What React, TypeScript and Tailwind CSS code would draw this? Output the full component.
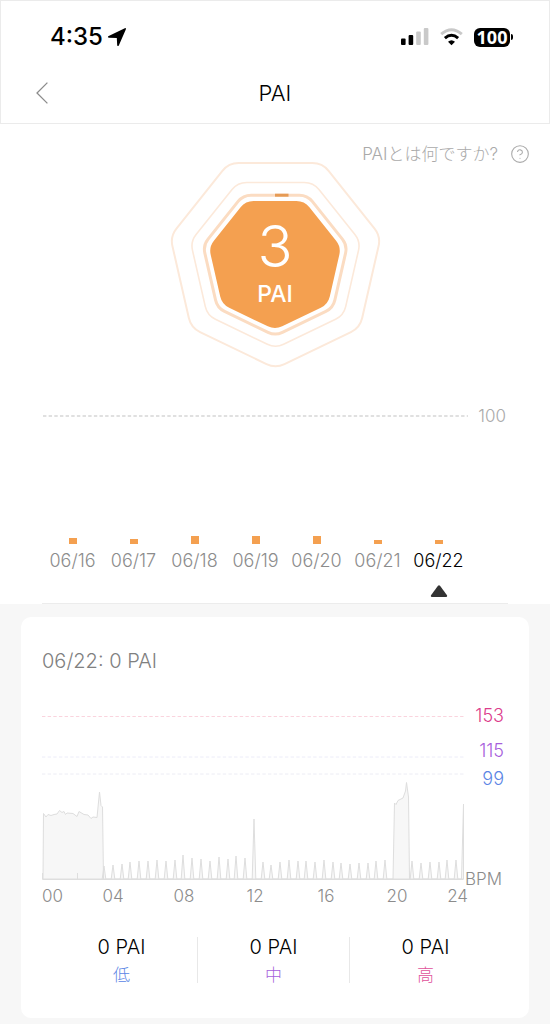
import { CircleHelp } from "lucide-react";

const days = [
  { label: "06/16", bar: "h-1.5" },
  { label: "06/17", bar: "h-[5px]" },
  { label: "06/18", bar: "h-2" },
  { label: "06/19", bar: "h-2" },
  { label: "06/20", bar: "h-2" },
  { label: "06/21", bar: "h-1" },
  { label: "06/22", bar: "h-1", selected: true },
];

const zones = [
  { value: "0 PAI", label: "低", color: "text-[#5b86e5]" },
  { value: "0 PAI", label: "中", color: "text-[#a75fdc]" },
  { value: "0 PAI", label: "高", color: "text-[#e0509a]" },
];

const hours = ["04", "08", "12", "16", "20"];

// [x, height] of the short pulses between the two long recordings
const pulses = [
  [62, 13], [71, 14], [80, 15], [88, 17], [97, 18], [106, 18], [115, 19], [124, 18], [133, 19],
  [141, 24], [150, 21], [159, 20], [168, 18], [177, 22], [186, 20], [194, 23], [203, 21], [212, 60],
  [221, 17], [229, 14], [238, 17], [247, 19], [256, 18], [264, 18], [273, 17], [282, 19], [291, 17],
  [299, 16], [308, 15], [317, 16], [326, 16], [334, 18], [343, 19],
];

const latePulses = [[370, 18], [379, 16], [388, 17], [397, 17], [405, 19], [414, 19]];

function pulsePath(items: number[][]) {
  return items.map(([x, h]) => `L${x - 1.8} 163L${x} ${163 - h}L${x + 1.8} 163`).join("");
}

const heartRate =
  "M1 163L1.5 97.5L4 101L6 98.5L9 99.5L12 98.5L15 98L17.5 94.5L20 96.5L22 95.5L23.5 98.5L25 97L31 97.5L35 100.5L37 95.5L42 98.5L46 99L49 102.5L51 101L55 101.5L57.5 76L59 89.5L60.5 91L61.5 163" +
  pulsePath(pulses) +
  "L351 163L352.5 87L354 88.5L356 84.5L361 82L363.5 75L364.5 66.5L366.5 81L367.5 163" +
  pulsePath(latePulses) +
  "L419.5 163L421.5 88V163Z";

// Regular heptagon standing on its tip, with softened corners
function heptagon(cx: number, cy: number, radius: number, trim: number) {
  const points = Array.from({ length: 7 }, (_, i) => {
    const angle = (i * 2 * Math.PI) / 7;
    return [cx + radius * Math.sin(angle), cy + radius * Math.cos(angle)];
  });
  const parts = points.map(([x, y], i) => {
    const [px, py] = points[(i + 6) % 7];
    const [nx, ny] = points[(i + 1) % 7];
    const side = Math.hypot(px - x, py - y);
    const t = trim / side;
    const start = `${x + (px - x) * t} ${y + (py - y) * t}`;
    const end = `${x + (nx - x) * t} ${y + (ny - y) * t}`;
    return `${i === 0 ? "M" : "L"}${start}Q${x} ${y} ${end}`;
  });
  return parts.join("") + "Z";
}

function StatusBar() {
  return (
    <div className="flex items-center justify-between pl-[49px] pr-9 text-black">
      <div className="flex items-center gap-1">
        <span className="text-2xl leading-6 font-medium">4:35</span>
        <svg width="20" height="20" viewBox="0 0 20 20" aria-hidden="true">
          <path d="M1.2 9.2L17.8 1.2Q19.4 .8 18.8 2.4L11.8 18.4Q10.8 19.8 10.2 18.2L9.8 10.9L2 10.8Q.2 10.4 1.2 9.2Z" />
        </svg>
      </div>
      <div className="flex items-center gap-[11px]">
        <svg width="28" height="18" viewBox="0 0 28 18" aria-hidden="true">
          <rect x="0" y="10.5" width="4.6" height="6.5" rx="1" />
          <rect x="7.6" y="7" width="4.6" height="10" rx="1" />
          <rect x="15.2" y="3.5" width="4.6" height="13.5" rx="1" fill="#c9c9c9" />
          <rect x="22.8" y="0" width="4.6" height="17" rx="1" fill="#c9c9c9" />
        </svg>
        <svg width="23" height="18" viewBox="0 0 23 18" fill="none" strokeWidth="3" aria-hidden="true">
          <path d="M1.2 6.2Q11.5 -2.6 21.8 6.2" stroke="#c9c9c9" />
          <path d="M4.9 10.2Q11.5 4.4 18.1 10.2" stroke="#000" />
          <path d="M11.5 17.3L8 13.7Q11.5 10.6 15 13.7Z" fill="#000" />
        </svg>
        <div className="flex items-center gap-px">
          <span className="flex h-[19px] w-9 items-center justify-center rounded-md bg-black font-['Open_Sans',sans-serif] text-[18px] leading-4 font-bold text-white">
            100
          </span>
          <span className="h-1.5 w-0.5 rounded-r-full bg-black" />
        </div>
      </div>
    </div>
  );
}

function Score() {
  return (
    <div className="-mt-1 grid justify-center">
      <svg className="col-start-1 row-start-1" width="220" height="210" viewBox="0 0 220 210" fill="none" aria-hidden="true">
        <path d={heptagon(110.5, 100.4, 108, 10)} stroke="#fce9da" strokeWidth="2" />
        <path d={heptagon(110.5, 101, 87.2, 9)} stroke="#fce9da" strokeWidth="1.6" />
        <path d={heptagon(110.2, 101.8, 74, 8)} stroke="#fbdcc2" strokeWidth="3" />
        <path d="M110 35.2H123.5" stroke="#e69b55" strokeWidth="3" />
        <path d={heptagon(110, 102, 67.8, 8)} fill="#f4a050" />
      </svg>
      <div className="col-start-1 row-start-1 flex flex-col items-center pt-14 text-white">
        <span className="text-[58px] leading-[60px] font-light">3</span>
        <span className="mt-1.5 text-[23px] leading-6 font-medium">PAI</span>
      </div>
    </div>
  );
}

function WeekChart() {
  return (
    <section className="mx-[42px] mt-9 border-b border-[#ececec] pb-1.5">
      <div className="flex items-center gap-2.5 text-[17px] leading-5 font-light text-[#aaa]">
        <svg className="h-0.5 min-w-0 flex-1" aria-hidden="true">
          <line x1="1" x2="100%" y1="1" y2="1" stroke="#e0e0e0" strokeWidth="2" strokeDasharray="3.4 2.25" />
        </svg>
        <span className="pr-0.5">100</span>
      </div>
      <div className="mr-[39px] flex">
        {days.map((day) => (
          <div key={day.label} className="flex flex-1 flex-col items-center">
            <div className="flex h-[118px] items-end">
              <div className={`w-2 bg-[#f4a050] ${day.bar}`} />
            </div>
            <button
              type="button"
              className={`mt-[7px] text-lg leading-5 font-light ${day.selected ? "text-black" : "text-[#8c8c8c]"}`}
            >
              {day.label}
            </button>
            {day.selected && (
              <svg className="mt-3.5" width="18" height="12" viewBox="0 0 18 12" fill="#333" aria-hidden="true">
                <path d="M8 .8Q9 -.2 10 .8L17 10.2Q17.6 12 16 12H2Q.4 12 1 10.2Z" />
              </svg>
            )}
          </div>
        ))}
      </div>
    </section>
  );
}

function DayCard() {
  return (
    <section className="rounded-[10px] bg-white pt-8 pb-[35px]">
      <h2 className="px-[21px] text-xl leading-6 font-light text-[#808080]">06/22: 0 PAI</h2>
      <div className="mt-[33px] flex pr-[25px] pl-[21px] text-[17px] leading-5 font-light">
        <div className="min-w-0 flex-1 pt-2.5">
          <svg className="block w-full" viewBox="0 0 422 164" fill="none" aria-hidden="true">
            <path d="M0 .5H422" stroke="#fad4de" strokeDasharray="3.4 2.25" />
            <path d="M0 41H422" stroke="#ececf8" strokeDasharray="3.4 2.25" />
            <path d="M0 58H422" stroke="#ececf4" strokeDasharray="3.4 2.25" />
            <path d={heartRate} fill="#f7f7f7" stroke="#dedede" strokeLinejoin="round" />
            <path d="M.5 157V163.5H421.5M35.5 157V163" stroke="#dedede" />
          </svg>
          <div className="-mr-1 mt-1.5 flex text-[#8c8c8c]">
            <span className="flex-1">00</span>
            {hours.map((hour) => (
              <span key={hour} className="flex-2 text-center">
                {hour}
              </span>
            ))}
            <span className="flex-1 text-right">24</span>
          </div>
        </div>
        <div className="flex w-10 flex-col items-end">
          <span className="text-lg leading-5 text-[#dc3c8c]">153</span>
          <span className="mt-[15px] text-lg leading-5 text-[#a75fdc]">115</span>
          <span className="mt-2 text-lg leading-5 text-[#5b86e5]">99</span>
          <span className="mt-20 pr-0.5 text-[#8c8c8c]">BPM</span>
        </div>
      </div>
      <div className="mt-[31px] flex divide-x divide-[#e8e8e8] pr-7 pl-[25px]">
        {zones.map((zone) => (
          <div key={zone.label} className="flex flex-1 flex-col items-center">
            <span className="text-xl leading-5 font-light text-black">{zone.value}</span>
            <span className={`mt-2.5 text-[17px] leading-4 font-light ${zone.color}`}>{zone.label}</span>
          </div>
        ))}
      </div>
    </section>
  );
}

export default function App() {
  return (
    <div className="flex min-h-screen flex-col bg-white font-['Inter','Noto_Sans_CJK_JP',sans-serif]">
      <header className="border border-[#ebebeb] pt-6 pb-4">
        <StatusBar />
        <div className="mt-[30px] grid grid-cols-3 items-center px-[35px]">
          <button type="button" aria-label="戻る" className="justify-self-start">
            <svg width="12" height="22" viewBox="0 0 12 22" fill="none" stroke="#8c8c8c" strokeWidth="1.3" aria-hidden="true">
              <path d="M11.4 .6L1 11L11.4 21.4" />
            </svg>
          </button>
          <h1 className="text-center text-[22px] leading-7 font-light text-black">PAI</h1>
        </div>
      </header>
      <main className="flex flex-1 flex-col">
        <div className="flex justify-end pt-5 pr-5">
          <a href="#about" className="flex items-center gap-3 text-[17px] leading-5 font-light text-[#aaa]">
            PAIとは何ですか?
            <CircleHelp size={20} strokeWidth={1.3} aria-hidden="true" />
          </a>
        </div>
        <Score />
        <WeekChart />
        <div className="flex-1 bg-[#f7f7f7] px-[21px] pt-[13px] pb-1.5">
          <DayCard />
        </div>
      </main>
    </div>
  );
}
